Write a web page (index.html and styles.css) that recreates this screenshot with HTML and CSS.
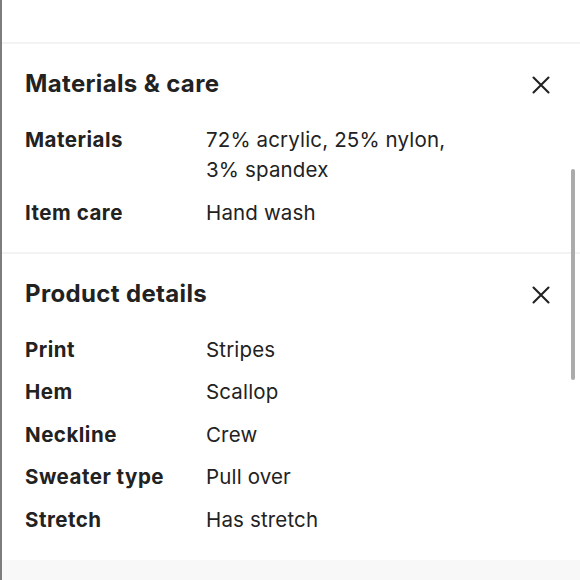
FILE: index.html
```html
<!DOCTYPE html>
<html lang="en">
<head>
<meta charset="utf-8">
<link rel="stylesheet" href="styles.css">
</head>
<body>
<div class="panel">
  <div class="top"></div>
  <section class="section">
    <div class="head">
      <h2 class="title">Materials &amp; care</h2>
      <svg class="close" viewBox="0 0 18 18" width="18" height="18"><path d="M1.5 1.5 L16.5 16.5 M16.5 1.5 L1.5 16.5" stroke="#222" stroke-width="2.1" stroke-linecap="round" fill="none"/></svg>
    </div>
    <div class="rows">
      <div class="row"><div class="label">Materials</div><div class="value">72% acrylic, 25% nylon,<br>3% spandex</div></div>
      <div class="row"><div class="label">Item care</div><div class="value">Hand wash</div></div>
    </div>
  </section>
  <section class="section section-last">
    <div class="head">
      <h2 class="title">Product details</h2>
      <svg class="close" viewBox="0 0 18 18" width="18" height="18"><path d="M1.5 1.5 L16.5 16.5 M16.5 1.5 L1.5 16.5" stroke="#222" stroke-width="2.1" stroke-linecap="round" fill="none"/></svg>
    </div>
    <div class="rows">
      <div class="row"><div class="label">Print</div><div class="value">Stripes</div></div>
      <div class="row"><div class="label">Hem</div><div class="value">Scallop</div></div>
      <div class="row"><div class="label">Neckline</div><div class="value">Crew</div></div>
      <div class="row"><div class="label">Sweater type</div><div class="value">Pull over</div></div>
      <div class="row"><div class="label">Stretch</div><div class="value">Has stretch</div></div>
    </div>
  </section>
  <div class="footer"></div>
  <div class="scrollbar"></div>
</div>
</body>
</html>
```
FILE: styles.css
```css
html, body {
  margin: 0;
  padding: 0;
  background: #fff;
}
body {
  font-family: Inter, Lato, "Noto Sans", sans-serif;
  color: #222;
}
.panel {
  position: relative;
  height: 580px;
  border-left: 2px solid #7d7d7d;
  box-sizing: border-box;
  overflow: hidden;
  display: flex;
  flex-direction: column;
}
.top {
  height: 42px;
  flex: none;
}
.section {
  border-top: 2px solid #f3f3f3;
  padding: 25px 30px 24px 23px;
}
.section-last {
  padding-bottom: 25px;
}
.head {
  display: flex;
  align-items: center;
  justify-content: space-between;
  height: 30px;
  margin-bottom: 26px;
}
.title {
  margin: 0;
  font-size: 24px;
  line-height: 30px;
  font-weight: 700;
  letter-spacing: 0.35px;
}
.close {
  display: block;
  margin-top: 2px;
}
.rows {
  display: flex;
  flex-direction: column;
  gap: 12.5px;
}
.row {
  display: flex;
  font-size: 20.5px;
  line-height: 30px;
  letter-spacing: 0.15px;
}
.label {
  width: 181px;
  flex: none;
  font-weight: 700;
  letter-spacing: 0.5px;
}
.value {
  font-weight: 400;
}
.footer {
  flex: 1;
  background: #f8f8f8;
}
.scrollbar {
  position: absolute;
  right: 5px;
  top: 169px;
  width: 4px;
  height: 211px;
  border-radius: 2px;
  background: #ababab;
}
```
